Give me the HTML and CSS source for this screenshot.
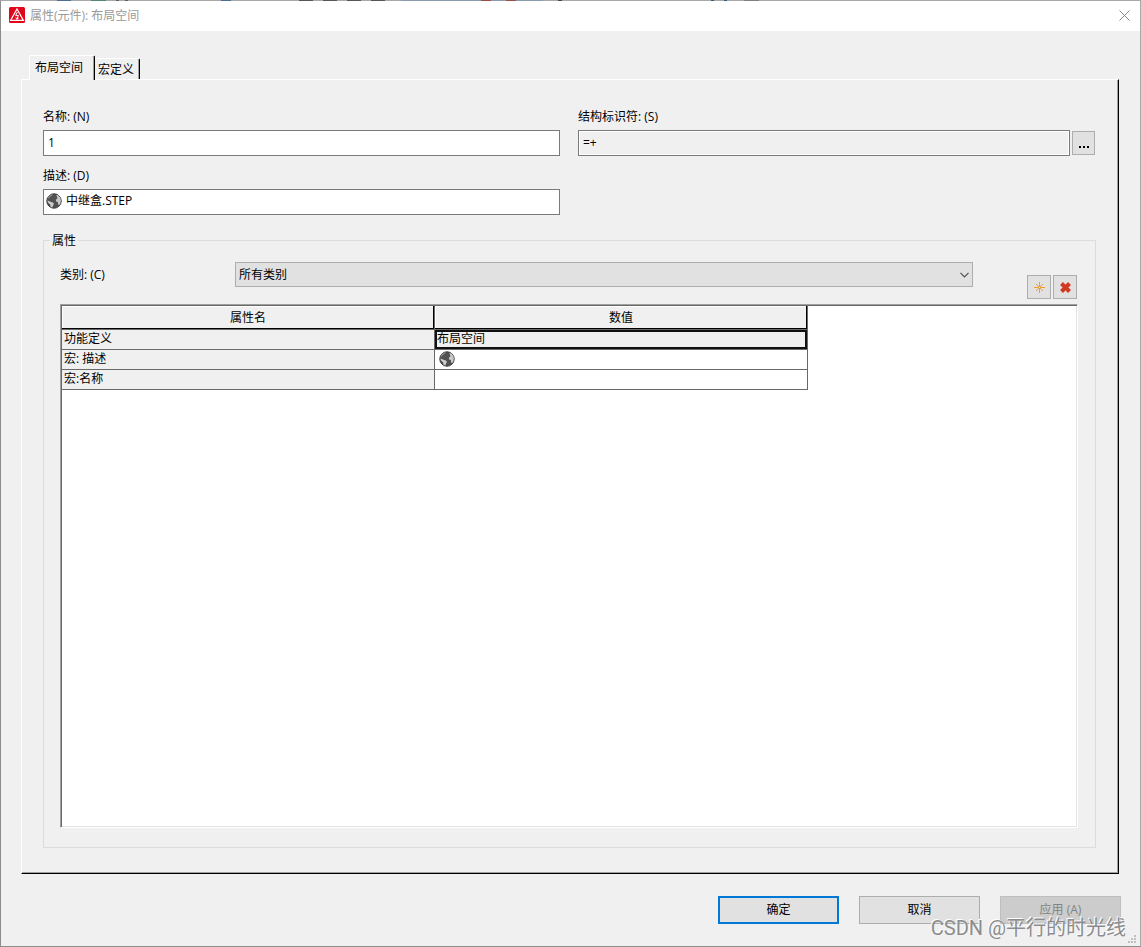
FILE: index.html
```html
<!DOCTYPE html>
<html lang="zh-CN">
<head>
<meta charset="utf-8">
<title>属性(元件): 布局空间</title>
<link rel="stylesheet" href="styles.css">
</head>
<body>
<svg class="defs" aria-hidden="true">
  <symbol id="globe" viewBox="0 0 16 16">
    <circle cx="8" cy="8" r="7.2" fill="#515151" stroke="#3a3a3a"/>
    <path d="M2.4 3.6 4.6 1.8 7 1.2 6.2 2.4 4.4 3.4 3.4 5 2 5.8Z" fill="#8d8d8d"/>
    <path d="M1.2 7.4 2.8 8 4.4 8.8 6.8 9.6 8 10.8 7 12.4 6.4 14.6 4.4 13.6 4.2 11.4 2.2 9.8Z" fill="#cdcdcd"/>
    <path d="M10.4 1.8 12.4 2.6 14.2 4.8 14.9 7.6 14.4 10.6 13 12.2 12 11.2 12 9.2 10.2 8.4 9.8 6.8 11.4 5.4 11 3.8Z" fill="#c8c8c8"/>
  </symbol>
</svg>
<div class="window">
  <header class="titlebar">
    <svg class="logo" viewBox="0 0 16 16" aria-hidden="true">
      <rect width="16" height="16" rx="1.5" fill="#e2061c"/>
      <path d="M8 2 14.4 13.4H1.6Z" fill="none" stroke="#fff" stroke-width="1.2"/>
      <path d="M8.4 5 6.6 8.4H9.4L8 12M6.8 10.4 7.8 12.4 9.6 11" fill="none" stroke="#fff"/>
    </svg>
    <h1 class="title">属性(元件): 布局空间</h1>
    <button class="close" type="button" aria-label="关闭">
      <svg viewBox="0 0 11 11" aria-hidden="true"><path d="M.5 .5 10.5 10.5M10.5 .5 .5 10.5" stroke="#888" fill="none"/></svg>
    </button>
  </header>
  <main class="content">
    <div class="tabs" role="tablist">
      <button class="tab tab-active" type="button" role="tab" aria-selected="true">布局空间</button>
      <button class="tab" type="button" role="tab" aria-selected="false">宏定义</button>
    </div>
    <section class="panel" role="tabpanel">
      <div class="fields">
        <div class="field">
          <label for="name">名称: (N)</label>
          <input class="box" id="name" type="text" value="1">
        </div>
        <div class="field">
          <label for="ident">结构标识符: (S)</label>
          <div class="with-button">
            <input class="box box-readonly" id="ident" type="text" value="=+" readonly>
            <button class="more" type="button" aria-label="浏览"><svg viewBox="0 0 10 2" aria-hidden="true"><path d="M0 0h2v2H0zM4 0h2v2H4zM8 0h2v2H8z"/></svg></button>
          </div>
        </div>
        <div class="field">
          <label for="desc">描述: (D)</label>
          <div class="box box-icon">
            <svg class="globe" aria-hidden="true"><use href="#globe"/></svg>
            <input class="bare" id="desc" type="text" value="中继盒.STEP">
          </div>
        </div>
      </div>
      <div class="group" role="group" aria-labelledby="group-title">
        <h2 class="legend" id="group-title">属性</h2>
        <div class="toolbar">
          <label class="category-label" for="category">类别: (C)</label>
          <div class="category">
            <select id="category"><option>所有类别</option></select>
            <svg class="chevron" viewBox="0 0 9 6" aria-hidden="true"><path d="M.5 .8 4.5 4.8 8.5 .8" fill="none" stroke="#505050" stroke-width="1.2"/></svg>
          </div>
          <div class="tools">
            <button class="tool" type="button" aria-label="新建"><svg viewBox="0 0 12 12" aria-hidden="true"><path d="M6.5 1V12M1 6.5H12M3 3 10 10M10 3 3 10" stroke="#e5a23c" fill="none"/><path d="M5 5h3v3H5z" fill="#e5a23c"/><path d="M6 6h1v1H6z" fill="#fff3d0"/></svg></button>
            <button class="tool" type="button" aria-label="删除"><svg viewBox="0 0 12 12" aria-hidden="true"><path d="M2.5 2.5 10.5 10.5M10.5 2.5 2.5 10.5" stroke="#cf3a20" stroke-width="4" fill="none"/></svg></button>
          </div>
        </div>
        <div class="list">
          <table class="grid">
            <thead><tr><th scope="col">属性名</th><th scope="col">数值</th></tr></thead>
            <tbody>
              <tr><td class="key">功能定义</td><td class="selected">布局空间</td></tr>
              <tr><td class="key">宏: 描述</td><td><svg class="globe cell-globe" aria-hidden="true"><use href="#globe"/></svg></td></tr>
              <tr><td class="key">宏:名称</td><td></td></tr>
            </tbody>
          </table>
        </div>
      </div>
    </section>
  </main>
  <footer class="actions">
    <button class="action action-default" type="button">确定</button>
    <button class="action" type="button">取消</button>
    <button class="action" type="button" disabled>应用 (A)</button>
  </footer>
  <svg class="grip" viewBox="0 0 8 8" aria-hidden="true"><path d="M6 0h2v2H6zM3 3h2v2H3zM6 3h2v2H6zM0 6h2v2H0zM3 6h2v2H3zM6 6h2v2H6z" fill="#bfbfbf"/></svg>
  <div class="watermark">CSDN @平行的时光线</div>
</div>
</body>
</html>
```
FILE: styles.css
```css
*, *::before, *::after { box-sizing: border-box; }
body {
  margin: 0;
  background: #f0f0f0;
  color: #000;
  font: 12px/16px "Open Sans", "Noto Sans CJK SC", sans-serif;
}
button, input, select { font: inherit; color: inherit; border-radius: 0; margin: 0; }
button { padding: 0; border: 1px solid #adadad; background: #e1e1e1; }
svg { display: block; }
.defs { position: absolute; width: 0; height: 0; }

.window {
  position: relative;
  display: flex;
  flex-direction: column;
  min-height: 100vh;
  border: 1px solid #a8a8a8;
  border-left-color: #8c8c8c;
  border-bottom-color: #8c8c8c;
}
.window::before {
  content: "";
  position: absolute;
  top: -1px;
  left: 0;
  right: 0;
  height: 1px;
  background: linear-gradient(90deg, transparent 56px, #4a6f95 56px 70px, transparent 70px 90px, #4f8a70 90px 105px, transparent 105px 115px, #606060 115px 118px, transparent 118px 124px, #606060 124px 127px, transparent 127px 220px, #4a6f95 220px 230px, transparent 230px 298px, #555 298px 312px, transparent 312px 322px, #555 322px 336px, transparent 336px 346px, #555 346px 360px, transparent 360px 370px, #555 370px 384px, transparent 384px 400px, #8a9bb0 400px 480px, #9c4e46 480px 490px, #8a9bb0 490px 505px, #9c4e46 505px 515px, #8a9bb0 515px 542px, transparent 542px 557px, #444 557px 561px, transparent 561px 710px, #286080 710px 713px, transparent 713px 723px, #286080 723px 726px, transparent 726px 743px, #808080 743px 758px, transparent 758px);
}

.titlebar {
  display: flex;
  align-items: center;
  height: 30px;
  padding: 0 10px 2px 8px;
  background: #fff;
}
.logo { width: 16px; height: 16px; }
.title { flex: 1; margin: 0 0 0 5px; padding-top: 2px; font-size: 12px; font-weight: 400; color: #999; }
.close { border: 0; background: none; }
.close svg { width: 11px; height: 11px; }

.content { flex: 1; display: flex; flex-direction: column; padding: 24px 21px 0 20px; }
.tabs { display: flex; align-items: flex-end; height: 24px; padding-left: 8px; }
.tab {
  height: 21px;
  padding: 2px 5px 0 3px;
  border: 0;
  border-top: 1px solid #fff;
  border-right: 1px solid #000;
  border-radius: 0 2px 0 0;
  background: #f0f0f0;
  box-shadow: inset -1px 0 #a0a0a0;
}
.tab-active {
  position: relative;
  height: 25px;
  margin-bottom: -1px;
  padding: 0 11px 0 5px;
  border-left: 1px solid #fff;
  border-radius: 2px 2px 0 0;
}
.panel {
  flex: 1;
  display: flex;
  flex-direction: column;
  padding: 29px 22px 25px 21px;
  border: 1px solid #fff;
  border-right-color: #000;
  border-bottom-color: #000;
  box-shadow: inset -1px -1px #a0a0a0;
}

.fields { display: grid; grid-template-columns: 1fr 1fr; gap: 12px 18px; padding-right: 1px; }
.field { display: flex; flex-direction: column; gap: 5px; }
.box {
  width: 100%;
  height: 26px;
  padding: 0 4px 2px;
  border: 1px solid #7a7a7a;
  background: #fff;
}
.box-readonly { background: #f0f0f0; box-shadow: inset 0 0 0 1px #fff; }
.box-icon { display: flex; align-items: center; gap: 4px; padding: 0 2px 3px; }
.bare { flex: 1; min-width: 0; padding: 0; border: 0; background: none; }
.bare:focus, .box:focus { outline: none; }
.globe { flex: none; width: 16px; height: 16px; }
.with-button { display: flex; align-items: center; gap: 2px; }
.with-button .box { flex: 1; min-width: 0; }
.more { display: grid; justify-items: center; align-items: end; width: 23px; height: 24px; padding-bottom: 6px; }
.more svg { width: 10px; height: 2px; }

.group {
  flex: 1;
  display: flex;
  flex-direction: column;
  margin-top: 25px;
  padding: 0 17px 19px 16px;
  border: 1px solid #dcdcdc;
}
.legend {
  align-self: flex-start;
  margin: -8px 0 13px -10px;
  padding: 0 2px;
  background: #f0f0f0;
  font-size: 12px;
  font-weight: 400;
}
.toolbar { display: flex; height: 37px; margin-bottom: 5px; padding-right: 1px; }
.category-label { width: 175px; padding-top: 5px; }
.category { flex: 1; position: relative; height: 25px; margin-right: 54px; }
.category select {
  appearance: none;
  width: 100%;
  height: 100%;
  padding: 0 24px 0 3px;
  border: 1px solid #adadad;
  background: #e1e1e1;
}
.chevron { position: absolute; right: 4px; top: 10px; width: 9px; height: 6px; pointer-events: none; }
.tools { display: flex; align-items: flex-end; gap: 2px; }
.tool { display: grid; place-items: center; width: 24px; height: 24px; }
.tool svg { width: 12px; height: 12px; }

.list {
  flex: 1;
  border: 1px solid;
  border-color: #a0a0a0 #fff #fff #a0a0a0;
  background: #fff;
  box-shadow: inset 1px 1px #696969, inset -1px -1px #e3e3e3;
  padding: 1px;
}
.grid { width: 746px; max-width: 100%; table-layout: fixed; border-collapse: separate; border-spacing: 0; }
.grid th, .grid td {
  padding: 0 1px;
  border-right: 1px solid #696969;
  border-bottom: 1px solid #696969;
  text-align: left;
  font-weight: 400;
}
.grid th {
  height: 24px;
  background: #f0f0f0;
  text-align: center;
  box-shadow: inset -1px -1px #000, inset 1px 1px #fff;
}
.grid td { height: 20px; padding-bottom: 1px; }
.grid .key { background: #f0f0f0; padding-left: 2px; }
.grid .selected { padding-left: 2px; background: #f0f0f0; box-shadow: inset 0 0 0 2px #101010; }
.cell-globe { margin-left: 3px; }

.actions { display: flex; justify-content: flex-end; gap: 20px; padding: 22px 19px; }
.action { width: 121px; height: 28px; }
.action-default { border: 2px solid #0078d7; }
.action:disabled { background: #ccc; border-color: #bfbfbf; color: #838383; }
.grip { position: absolute; right: 4px; bottom: 3px; width: 8px; height: 8px; }
.watermark {
  position: absolute;
  right: 14px;
  bottom: 6px;
  font: 400 20px/24px Roboto, "Noto Sans CJK SC", sans-serif;
  color: #8c8c8c;
  text-shadow: -1px -1px #fff;
  pointer-events: none;
}
```
